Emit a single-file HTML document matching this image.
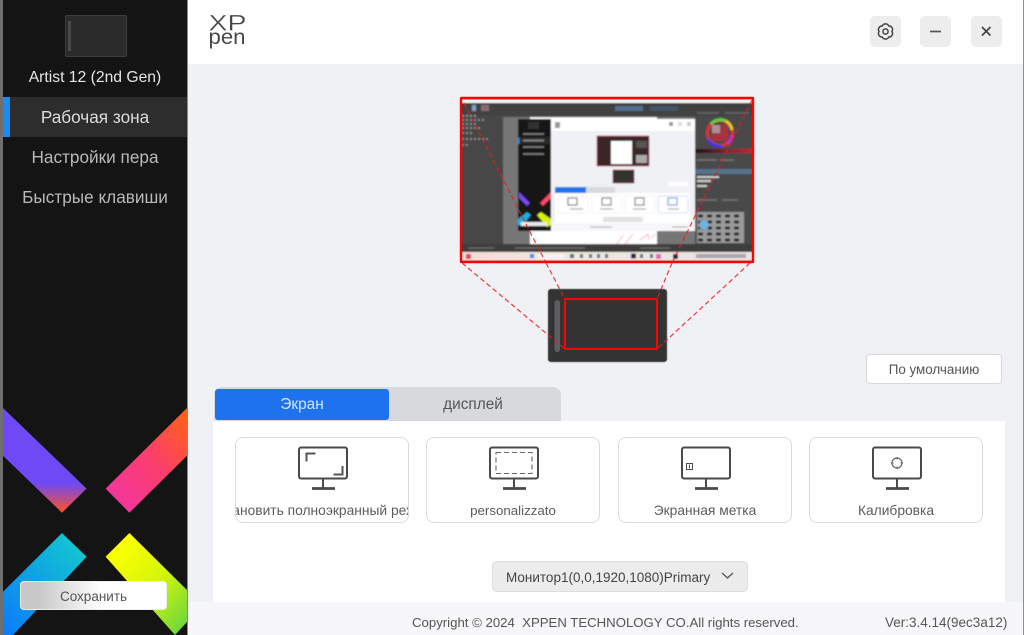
<!DOCTYPE html>
<html><head><meta charset="utf-8"><style>
*{box-sizing:border-box}
html,body{margin:0;padding:0}
body{width:1024px;height:635px;overflow:hidden;background:#f0f1f5;font-family:"Liberation Sans",sans-serif;position:relative;color:#555}
.a{position:absolute}
.menu{left:3px;width:184px;height:40px;line-height:40px;text-align:center;font-size:17.2px;color:#b9b9b9}
.card{top:437px;width:174px;height:86px;background:#fff;border:1px solid #dcdcdf;border-radius:8px;overflow:hidden}
.card span{position:absolute;left:-60px;right:-60px;top:65px;text-align:center;font-size:13.8px;color:#5c5c5c;white-space:nowrap}
.card svg{position:absolute;left:62px;top:8px}
.wb{top:16px;width:31px;height:31px;background:#ededed;border-radius:5px}
</style></head><body>
<div class="a" style="left:0;top:0;width:3px;height:635px;background:#6e6e6e"></div>
<div class="a" style="left:3px;top:0;width:184px;height:635px;background:#141414"></div>
<div class="a" style="left:187px;top:0;width:1px;height:635px;background:#8a8a8a"></div>
<div class="a" style="left:188px;top:0;width:835px;height:64px;background:#fff"></div>
<div class="a" style="left:1023px;top:0;width:1px;height:635px;background:#8f8f8f"></div>

<div class="a" style="left:65px;top:15px;width:62px;height:42px;background:#2b2b2b;border:1px solid #3d3d3d;border-radius:2px"></div>
<div class="a" style="left:68px;top:21px;width:3px;height:30px;background:#4a4a4a"></div>
<div class="a" style="left:3px;top:67px;width:184px;text-align:center;font-size:15.7px;color:#e6e6e6;line-height:22px">Artist 12 (2nd Gen)</div>
<div class="a menu" style="top:97px;background:#2d2d2d;color:#dcdcdc">Рабочая зона</div>
<div class="a" style="left:3px;top:97px;width:7px;height:40px;background:#1a8cf0"></div>
<div class="a menu" style="top:137px">Настройки пера</div>
<div class="a menu" style="top:177px">Быстрые клавиши</div>

<svg class="a" style="left:0;top:0" width="1024" height="635" viewBox="0 0 1024 635">
<defs>
<linearGradient id="p" x1="0" y1="0" x2="0" y2="1"><stop offset=".72" stop-color="#6f49f5"/><stop offset="1" stop-color="#ff5226"/></linearGradient>
<linearGradient id="o" x1="0" y1="1" x2="1" y2="0"><stop offset=".1" stop-color="#f2369f"/><stop offset=".55" stop-color="#fb3e6b"/><stop offset="1" stop-color="#ff6411"/></linearGradient>
<linearGradient id="b" x1="1" y1="0" x2="0" y2="1"><stop offset=".1" stop-color="#12c6cf"/><stop offset="1" stop-color="#0c7bfa"/></linearGradient>
<linearGradient id="y" x1="0" y1="0" x2="1" y2="1"><stop offset=".2" stop-color="#f7ff00"/><stop offset=".55" stop-color="#d6f50a"/><stop offset="1" stop-color="#5dd444"/></linearGradient>
<linearGradient id="tb" x1="0" x2="1"><stop offset="0" stop-color="#f6dcd8"/><stop offset=".4" stop-color="#eee8da"/><stop offset="1" stop-color="#e8e2e4"/></linearGradient>
<linearGradient id="sl" x1="0" x2="1"><stop offset="0" stop-color="#1a1015"/><stop offset=".5" stop-color="#7a2030"/><stop offset="1" stop-color="#c8202a"/></linearGradient>
<filter id="bl" x="-5%" y="-5%" width="110%" height="110%"><feGaussianBlur stdDeviation=".8"/></filter>
</defs>
<polygon points="3,408 86.6,488.6 62,512.7 3,455.7" fill="url(#p)"/>
<polygon points="187,408 105.6,488.6 129.4,512.7 187,455.7" fill="url(#o)"/>
<polygon points="62,533 86.6,556.7 13,635 3,635 3,591.7" fill="url(#b)"/>
<polygon points="129.4,533 105.6,556.7 175,635 187,622 187,590" fill="url(#y)"/>

<!-- logo -->
<text x="208.500" y="30.500" font-family="Liberation Sans" font-size="22" textLength="38" lengthAdjust="spacingAndGlyphs" fill="#444" stroke="#fff" stroke-width=".3">XP</text>
<text x="208.500" y="44" font-family="Liberation Sans" font-size="21" textLength="37" lengthAdjust="spacingAndGlyphs" fill="#484848">pen</text>

<!-- thumbnail -->
<rect x="460" y="97" width="294" height="166" fill="#474747"/>
<g filter="url(#bl)">
<rect x="461" y="99" width="292" height="4" fill="#f4f4f4"/>
<rect x="461" y="103" width="292" height="4" fill="#3c3c3c"/>
<rect x="461" y="107" width="292" height="9" fill="#434343"/>
<rect x="615" y="106" width="28" height="5" fill="#52708f"/>
<rect x="650" y="106" width="28" height="5" fill="#3f5468"/>
<rect x="472" y="105" width="4" height="6" fill="#7f9fc8"/>
<rect x="481" y="105" width="8" height="6" fill="#8a6a70"/>
<path d="M462 116h16M462 120h22M462 124h14M462 128h20M462 133h12M462 139h28M462 145h6" stroke="#9a9a9a" stroke-width="2" stroke-dasharray="2 2" fill="none"/>
<rect x="503" y="117" width="214" height="127" fill="#767676"/>
<rect x="530" y="117" width="127" height="127" fill="#fff"/>
<rect x="461" y="244" width="292" height="9" fill="#3e3e3e"/>
<path d="M468 248h26M515 248h70M640 248h30" stroke="#6a6a6a" stroke-width="1.500"/>
<rect x="461" y="252" width="292" height="9" fill="url(#tb)"/>
<rect x="466" y="254" width="5" height="5" fill="#d24a5a"/>
<rect x="530" y="254" width="4" height="4" fill="#1a8ce0"/>
<rect x="538" y="254" width="26" height="5" fill="#f4f4f4"/>
<path d="M570 256h4M580 256h3M589 256h3M597 256h3M605 256h3M632 256h3M640 256h3M650 256h3" stroke="#47708f" stroke-width="4"/>
<rect x="631" y="253.500" width="5" height="5" fill="#1b2a4a"/>
<rect x="656" y="254" width="5" height="5" fill="#e56ab0"/>
<rect x="673" y="254" width="5" height="5" fill="#222"/>
<rect x="696" y="254" width="50" height="4" fill="#a8a4a8"/>
<!-- right docker -->
<rect x="695" y="116" width="58" height="128" fill="#484848"/>
<path d="M697 113h22M725 113h24" stroke="#6a6a6a" stroke-width="1.500"/>
<circle cx="720" cy="133" r="12.500" fill="none" stroke="#d33" stroke-width="3"/>
<path d="M711 124a12.500 12.500 0 0 1 15-3" stroke="#5cd23c" stroke-width="3" fill="none"/>
<path d="M708 139a13 13 0 0 0 14 7" stroke="#3838e8" stroke-width="3" fill="none"/>
<path d="M727 144a13 13 0 0 0 5-8" stroke="#d028d0" stroke-width="3" fill="none"/>
<path d="M726 121a13 13 0 0 1 6 9" stroke="#e8c820" stroke-width="3" fill="none"/>
<rect x="712" y="125" width="16" height="16" fill="#a83040"/>
<rect x="712" y="125" width="8" height="8" fill="#b09098"/>
<rect x="695" y="149" width="58" height="4" fill="url(#sl)"/>
<path d="M697 160h14M705 160h12M720 160h14" stroke="#777" stroke-width="1.500"/>
<rect x="695" y="169" width="58" height="5" fill="#59738c"/>
<path d="M697 177h22M697 181h14M697 186h10" stroke="#cfcfcf" stroke-width="2"/>
<path d="M697 200h20M722 200h16" stroke="#777" stroke-width="1.500"/>
<rect x="697" y="212" width="47" height="31" fill="#9a9a9a"/>
<path d="M698 216h45M698 222h45M698 228h45M698 234h45M698 240h45" stroke="#262626" stroke-width="3" stroke-dasharray="5 4"/>
<rect x="700" y="221" width="8" height="8" fill="#6cb4e4"/>
<!-- mini dialog -->
<rect x="518" y="119" width="33" height="112" fill="#121212"/>
<rect x="528" y="122" width="11" height="7" fill="#333"/>
<path d="M523 134h21M523 147h21M523 154h21" stroke="#888" stroke-width="1.500"/>
<rect x="518" y="137" width="33" height="7" fill="#2a2a2a"/>
<path d="M523 140.500h21" stroke="#999" stroke-width="1.500"/>
<rect x="518" y="138" width="1.500" height="6" fill="#1a8cf0"/>
<path d="M519 192l11 11-3 3-8-8z" fill="#7548f0"/>
<path d="M551 192l-11 11 3 3 8-8z" fill="#fb4a60"/>
<path d="M527 212l4 3-9 11-4-1v-6z" fill="#12b0e0"/>
<path d="M541 212l-4 3 10 12 4-2v-6z" fill="#d8f00a"/>
<rect x="521" y="222" width="26" height="4" fill="#e8e8e8"/>
<rect x="551" y="119" width="144" height="112" fill="#f0f1f5"/>
<rect x="551" y="119" width="144" height="12" fill="#fff"/>
<rect x="555" y="122" width="5" height="6" fill="#999"/>
<rect x="669" y="122" width="4" height="4" fill="#999"/><rect x="678" y="122" width="4" height="4" fill="#ddd"/><rect x="687" y="122" width="4" height="4" fill="#ccc"/>
<rect x="597" y="136" width="52" height="30" fill="#3a2528" stroke="#c05060" stroke-width=".7"/>
<rect x="611" y="141" width="21" height="23" fill="#fff"/>
<rect x="636" y="141" width="11" height="7" fill="#555"/><rect x="636" y="155" width="11" height="8" fill="#aaa"/>
<rect x="613" y="170" width="21" height="13" fill="#333" stroke="#a03040" stroke-width=".7"/>
<rect x="668" y="182" width="20" height="4" fill="#fff"/>
<rect x="555" y="187" width="31" height="6" fill="#1f72ee"/>
<rect x="586" y="187" width="29" height="6" fill="#d8d9dd"/>
<rect x="555" y="193" width="135" height="30" fill="#fff"/>
<g fill="#fff" stroke="#eceef2" stroke-width=".7"><rect x="558" y="196" width="30" height="17" rx="1"/><rect x="592" y="196" width="30" height="17" rx="1"/><rect x="625" y="196" width="30" height="17" rx="1"/></g>
<rect x="658" y="196" width="30" height="17" rx="2" fill="#fff" stroke="#cfdcf6" stroke-width=".9"/>
<g fill="none" stroke="#666" stroke-width="1.100"><rect x="568" y="198" width="9" height="7"/><rect x="602" y="198" width="9" height="7"/><rect x="635" y="198" width="9" height="7"/></g>
<rect x="668" y="198" width="9" height="7" fill="none" stroke="#5a90e8" stroke-width="1.100"/>
<path d="M570 209h13M600 209h13M633 209h13M668 209h11" stroke="#bbb" stroke-width="1.500"/>
<rect x="603" y="217" width="40" height="5" fill="#e2e2e2"/>
<rect x="551" y="223" width="144" height="8" fill="#f7f7f9"/>
<path d="M590 227h22M672 227h16" stroke="#b5b5b5" stroke-width="1.300"/>
<path d="M617 244l6-9M625 244l8-10M640 240l8-6 1 6M651 238l5-4" stroke="#e8a8a8" stroke-width=".8" fill="none"/>
</g>
<rect x="461" y="98" width="292" height="164" fill="none" stroke="#f00" stroke-width="2.400" rx="1"/>

<!-- big tablet -->
<rect x="548" y="289" width="119" height="73" rx="3" fill="#333" stroke="#8b8b8b" stroke-width=".8"/>
<rect x="554.500" y="300" width="5.500" height="52" rx="2.700" fill="#5d5e60"/>
<rect x="565" y="299" width="92" height="50" fill="none" stroke="#f00" stroke-width="2"/>
<g stroke="#ef1a1a" stroke-width="1.200" stroke-dasharray="5 3" fill="none" opacity=".85">
<path d="M462 263L565 349"/><path d="M546 263L565 299"/><path d="M672 263L657 299"/><path d="M750 263L657 349"/>
<path d="M464 103L546 263"/><path d="M752 100L672 263"/>
</g>
</svg>

<!-- window buttons -->
<div class="a wb" style="left:870px"><svg width="31" height="31" viewBox="0 0 31 31" fill="none" stroke="#444" stroke-width="1.500"><path d="M21.900 15.500A3.500 3.500 0 0 1 18.700 21A3.500 3.500 0 0 1 12.300 21A3.500 3.500 0 0 1 9.100 15.500A3.500 3.500 0 0 1 12.300 10A3.500 3.500 0 0 1 18.700 10A3.500 3.500 0 0 1 21.900 15.500Z"/><circle cx="15.500" cy="15.500" r="2.600"/></svg></div>
<div class="a wb" style="left:920px"><svg width="31" height="31" fill="none" stroke="#555" stroke-width="1.700"><path d="M10 15.500h11"/></svg></div>
<div class="a wb" style="left:971px"><svg width="31" height="31" fill="none" stroke="#444" stroke-width="1.700"><path d="M11 11l8.500 8.500M19.500 11L11 19.500"/></svg></div>

<div class="a" style="left:866px;top:354px;width:136px;height:30px;background:#fff;border:1px solid #d9d9dc;border-radius:4px;text-align:center;line-height:30px;font-size:13.4px;color:#555">По умолчанию</div>

<!-- tabs -->
<div class="a" style="left:214px;top:387px;width:347px;height:35px;background:#d8d9dd;border-radius:8px 8px 0 0"></div>
<div class="a" style="left:215px;top:389px;width:174px;height:31px;background:#1f72ee;border-radius:3px;color:#d8e6ff;text-align:center;line-height:31px;font-size:15.4px">Экран</div>
<div class="a" style="left:389px;top:389px;width:168px;height:31px;color:#555;text-align:center;line-height:31px;font-size:15.4px">дисплей</div>

<div class="a" style="left:213px;top:421px;width:792px;height:181px;background:#fff"></div>

<div class="a card" style="left:235px"><svg width="50" height="46" viewBox="0 0 50 46" fill="none" stroke="#4a4a4a" stroke-width="2"><rect x="1" y="1.500" width="48" height="31" rx="2"/><path d="M25 32.500v9"/><path d="M14 42.500h23" stroke-width="2.800"/><path d="M8.500 15.500V7.500h9M44.500 20v8.500h-9" stroke="#555"/></svg><span>Установить полноэкранный режим</span></div>
<div class="card a" style="left:426px"><svg width="50" height="46" viewBox="0 0 50 46" fill="none" stroke="#4a4a4a" stroke-width="2"><rect x="1" y="1.500" width="48" height="31" rx="2"/><path d="M14 42.500h23" stroke-width="2.800"/><path d="M25 32.500v9"/><rect x="7" y="6.500" width="36" height="21" stroke-width="1.100" stroke="#666" stroke-dasharray="5 3"/></svg><span style="font-size:13.3px">personalizzato</span></div>
<div class="card a" style="left:618px"><svg width="50" height="46" viewBox="0 0 50 46" fill="none" stroke="#4a4a4a" stroke-width="2"><rect x="1" y="1.500" width="48" height="31" rx="2"/><path d="M14 42.500h23" stroke-width="2.800"/><path d="M25 32.500v9"/><rect x="5.500" y="17.500" width="6" height="6" stroke-width="1"/><path d="M8.500 18.500v4" stroke-width="1"/></svg><span>Экранная метка</span></div>
<div class="card a" style="left:809px"><svg width="50" height="46" viewBox="0 0 50 46" fill="none" stroke="#4a4a4a" stroke-width="2"><rect x="1" y="1.500" width="48" height="31" rx="2"/><path d="M14 42.500h23" stroke-width="2.800"/><path d="M25 32.500v9"/><circle cx="25" cy="17" r="5" stroke-width="1.200" stroke="#666"/><path d="M25 11v2.500M25 20.500V23M19 17h2.500M28.500 17H31" stroke-width="1" stroke="#666"/></svg><span>Калибровка</span></div>

<div class="a" style="left:492px;top:561px;width:256px;height:31px;background:#ececec;border:1px solid #dcdcdc;border-radius:5px"></div>
<div class="a" style="left:506px;top:561px;height:31px;line-height:33px;font-size:13.5px;color:#444;white-space:nowrap">Монитор1(0,0,1920,1080)Primary</div>
<svg class="a" style="left:720px;top:570px" width="15" height="12" fill="none" stroke="#555" stroke-width="1.300"><path d="M2 3l5.500 5L13 3"/></svg>

<div class="a" style="left:188px;top:602px;width:835px;height:33px;background:#f7f7f9"></div>
<div class="a" style="left:412px;top:613px;font-size:13.2px;line-height:20px;color:#555;white-space:nowrap">Copyright © 2024&nbsp; XPPEN TECHNOLOGY CO.All rights reserved.</div>
<div class="a" style="left:885px;top:613px;font-size:13.5px;line-height:20px;color:#555;white-space:nowrap">Ver:3.4.14(9ec3a12)</div>

<div class="a" style="left:20px;top:581px;width:147px;height:29px;background:linear-gradient(90deg,#c8c8c8 0,#c8c8c8 12%,#fff 55%,#fff 100%);border:1px solid #eee;border-radius:4px;text-align:center;line-height:29px;font-size:13.5px;color:#555">Сохранить</div>
</body></html>
